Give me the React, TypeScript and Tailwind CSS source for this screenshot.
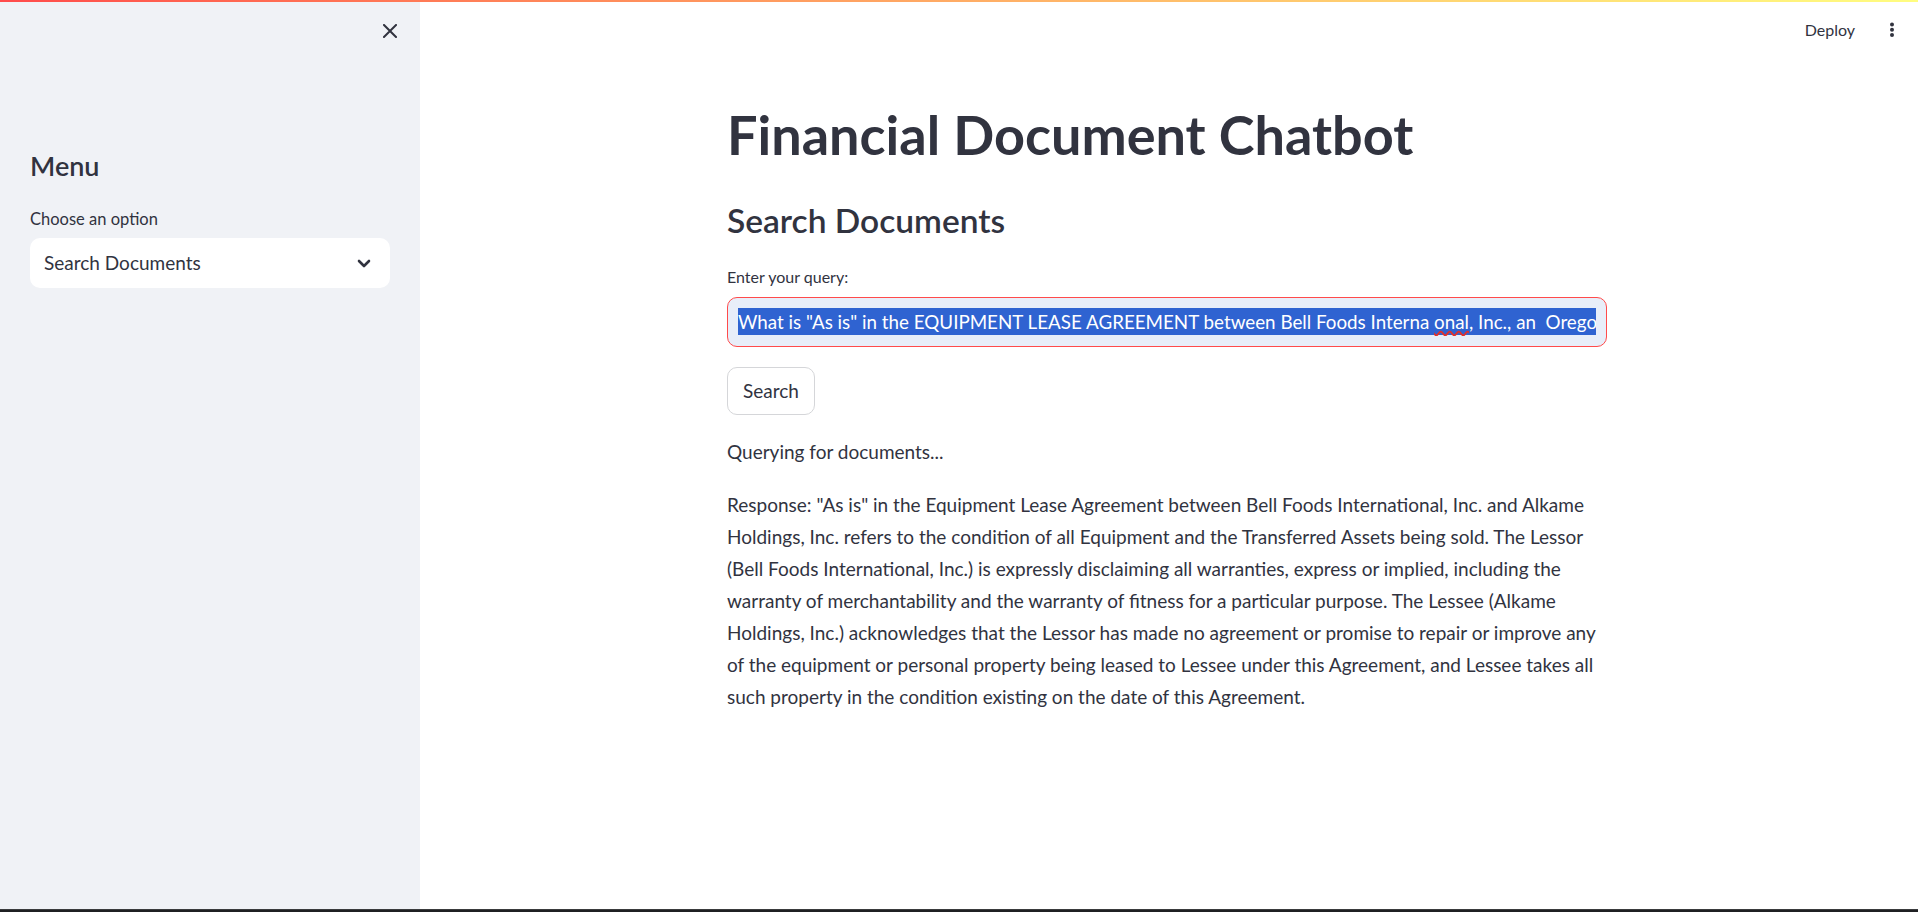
import { useState } from "react"

const responseLines = [
  'Response: "As is" in the Equipment Lease Agreement between Bell Foods International, Inc. and Alkame',
  "Holdings, Inc. refers to the condition of all Equipment and the Transferred Assets being sold. The Lessor",
  "(Bell Foods International, Inc.) is expressly disclaiming all warranties, express or implied, including the",
  "warranty of merchantability and the warranty of fitness for a particular purpose. The Lessee (Alkame",
  "Holdings, Inc.) acknowledges that the Lessor has made no agreement or promise to repair or improve any",
  "of the equipment or personal property being leased to Lessee under this Agreement, and Lessee takes all",
  "such property in the condition existing on the date of this Agreement.",
]

function CloseIcon() {
  return (
    <svg width="14" height="14" viewBox="0 0 14 14" fill="none">
      <path d="M1 1L13 13M13 1L1 13" stroke="#31333f" strokeWidth="2" strokeLinecap="square" />
    </svg>
  )
}

function Chevron() {
  return (
    <svg width="14" height="9" viewBox="0 0 14 9" fill="none">
      <path d="M2 2L7 7L12 2" stroke="#31333f" strokeWidth="2.6" strokeLinecap="round" strokeLinejoin="round" />
    </svg>
  )
}

function MoreIcon() {
  return (
    <svg width="6" height="18" viewBox="0 0 6 18" fill="#31333f">
      <circle cx="3" cy="3.5" r="2" />
      <circle cx="3" cy="8.7" r="2" />
      <circle cx="3" cy="13.9" r="2" />
    </svg>
  )
}

export default function App() {
  const [option] = useState("Search Documents")

  return (
    <div className="flex h-[912px] w-full flex-col overflow-hidden bg-white font-['Lato',sans-serif] text-[#31333f]">
      {/* decoration bar */}
      <div className="h-[2px] w-full shrink-0 bg-gradient-to-r from-[#ff4b4b] to-[#fffd80]" />

      <div className="flex min-h-0 flex-1">
        {/* Sidebar */}
        <aside className="flex w-[420px] shrink-0 flex-col bg-[#f0f2f6] px-[30px]">
          <div className="-mr-[7px] flex h-[58px] items-center justify-end">
            <button className="flex h-[14px] w-[14px] items-center justify-center">
              <CloseIcon />
            </button>
          </div>

          <h2 className="mt-[90px] text-[27px] font-semibold leading-[32px]">Menu</h2>
          <p className="mt-[25px] text-[16.5px] leading-[24px]">Choose an option</p>
          <div className="mt-[7px] flex h-[50px] items-center justify-between rounded-[10px] bg-white pl-[14px] pr-[19px]">
            <span className="text-[19px]">{option}</span>
            <Chevron />
          </div>
        </aside>

        {/* Main */}
        <main className="flex min-w-0 flex-1 flex-col">
          <div className="flex h-[56px] items-center justify-end gap-[34px] pr-[23px]">
            <span className="text-[16px]">Deploy</span>
            <MoreIcon />
          </div>

          <div className="ml-[307px] mt-[45px] w-[880px]">
            <h1 className="text-[54px] font-bold leading-[64px]">Financial Document Chatbot</h1>
            <h3 className="mt-[33px] text-[33.5px] font-semibold leading-[40px]">Search Documents</h3>

            <label className="mt-[25px] block text-[16px] leading-[24px]">Enter your query:</label>
            <div className="mt-[8px] flex h-[50px] items-center rounded-[10px] border border-[#ff4b4b] bg-[#e8eef9] px-[10px]">
              <div className="w-full overflow-hidden whitespace-pre text-[18.8px]">
                <span className="inline-block bg-[#2f63d1] leading-[27px] text-white">
                  What is "As is" in the EQUIPMENT LEASE AGREEMENT between Bell Foods Interna{" "}
                  <span className="underline decoration-[#e0302b] decoration-wavy underline-offset-[1px]">onal</span>
                  , Inc., an  Oregon corporation ("Lessor") and Alkame Holdings, Inc.
                </span>
              </div>
            </div>

            <button className="mt-[20px] flex h-[48px] items-center rounded-[10px] border border-[#d5d6d9] bg-white px-[15px] text-[19px]">
              Search
            </button>

            <p className="mt-[21px] text-[19px] leading-[32px]">Querying for documents...</p>

            <div className="mt-[21px] text-[19px] leading-[32px]">
              {responseLines.map((line, i) => (
                <div key={i} className="whitespace-nowrap">
                  {line}
                </div>
              ))}
            </div>
          </div>
        </main>
      </div>

      {/* bottom edge */}
      <div className="h-[3px] w-full shrink-0 border-t border-[#3a3b3d] bg-[#1f2023]" />
    </div>
  )
}
